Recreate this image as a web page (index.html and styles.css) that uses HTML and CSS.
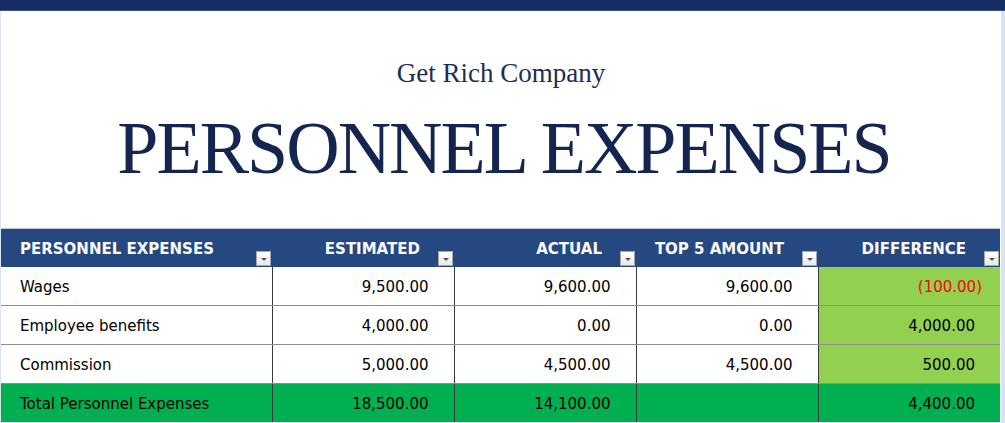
FILE: index.html
```html
<!DOCTYPE html>
<html lang="en">
<head>
<meta charset="utf-8">
<title>Personnel Expenses</title>
<link rel="stylesheet" href="styles.css">
</head>
<body>
<div class="topbar"></div>
<div class="sheet">
  <div class="heading">
    <div class="company">Get Rich Company</div>
    <h1 class="title">PERSONNEL EXPENSES</h1>
  </div>
  <table class="grid">
    <colgroup>
      <col class="c-name">
      <col class="c-num">
      <col class="c-num">
      <col class="c-num">
      <col class="c-num">
    </colgroup>
    <thead>
      <tr>
        <th class="h-left">PERSONNEL EXPENSES<span class="dd"></span></th>
        <th>ESTIMATED<span class="dd"></span></th>
        <th>ACTUAL<span class="dd"></span></th>
        <th>TOP 5 AMOUNT<span class="dd"></span></th>
        <th>DIFFERENCE<span class="dd"></span></th>
      </tr>
    </thead>
    <tbody>
      <tr>
        <td class="name">Wages</td>
        <td class="num">9,500.00</td>
        <td class="num">9,600.00</td>
        <td class="num">9,600.00</td>
        <td class="num diff neg">(100.00)</td>
      </tr>
      <tr>
        <td class="name">Employee benefits</td>
        <td class="num">4,000.00</td>
        <td class="num">0.00</td>
        <td class="num">0.00</td>
        <td class="num diff">4,000.00</td>
      </tr>
      <tr>
        <td class="name">Commission</td>
        <td class="num">5,000.00</td>
        <td class="num">4,500.00</td>
        <td class="num">4,500.00</td>
        <td class="num diff">500.00</td>
      </tr>
      <tr class="total">
        <td class="name">Total Personnel Expenses</td>
        <td class="num">18,500.00</td>
        <td class="num">14,100.00</td>
        <td class="num"></td>
        <td class="num">4,400.00</td>
      </tr>
    </tbody>
  </table>
</div>
</body>
</html>
```

FILE: styles.css
```css
html, body {
  margin: 0;
  padding: 0;
  background: #ffffff;
}

body {
  width: 1005px;
  height: 423px;
  overflow: hidden;
}

.topbar {
  height: 10px;
  background: #162d64;
  border-bottom: 1px solid #3b5288;
}

.sheet {
  width: 1000px;
  min-height: 412px;
  border-left: 1px solid #dbe5f5;
  border-right: 4px solid #d8e3f4;
  background: #ffffff;
  display: flex;
  flex-direction: column;
}

.heading {
  flex: none;
  height: 217px;
  display: flex;
  flex-direction: column;
  align-items: center;
}

.company {
  margin-top: 47px;
  font-family: "Liberation Serif", "DejaVu Serif", serif;
  font-size: 27px;
  line-height: 30px;
  color: #1d2c58;
}

.title {
  margin: 20px 0 0 0;
  padding-left: 6px;
  font-family: "Liberation Serif", "DejaVu Serif", serif;
  font-weight: normal;
  font-size: 74px;
  line-height: 80px;
  color: #142650;
  letter-spacing: -2px;
}

.grid {
  flex: none;
  border-collapse: collapse;
  table-layout: fixed;
  width: 999px;
  border-top: 1px solid #c8c8c8;
  font-family: "DejaVu Sans", Verdana, sans-serif;
  font-size: 15px;
  color: #000000;
}

.c-name { width: 271px; }
.c-num { width: 182px; }

.grid th {
  position: relative;
  height: 38px;
  padding: 3px 34px 0 0;
  box-sizing: border-box;
  background: #264881;
  color: #fbfbfb;
  font-weight: bold;
  font-size: 15px;
  text-align: right;
  white-space: nowrap;
}

.grid th.h-left {
  text-align: left;
  padding: 3px 0 0 19px;
}

.dd {
  position: absolute;
  right: 1px;
  bottom: 1px;
  width: 13px;
  height: 13px;
  background: linear-gradient(#ffffff, #e9e9e9);
  border: 1px solid #a6a6a6;
}

.dd::after {
  content: "";
  position: absolute;
  left: 4px;
  top: 6px;
  border-left: 3px solid transparent;
  border-right: 3px solid transparent;
  border-top: 3px solid #555555;
}

.grid td {
  height: 35px;
  padding: 3px 0 0 0;
  border-left: 1px solid #3a3a3a;
  border-bottom: 1px solid #8e8e8e;
  white-space: nowrap;
}

.grid td:first-child {
  border-left: none;
}

.grid td.name {
  padding-left: 19px;
}

.grid td.num {
  text-align: right;
  padding-right: 25px;
}

.grid td.diff {
  background: #92d050;
}

.grid td.neg {
  color: #ff0000;
  padding-right: 18px;
}

.grid tr.total td {
  background: #00b050;
  border-bottom: 2px solid #dfe6f1;
}
```
